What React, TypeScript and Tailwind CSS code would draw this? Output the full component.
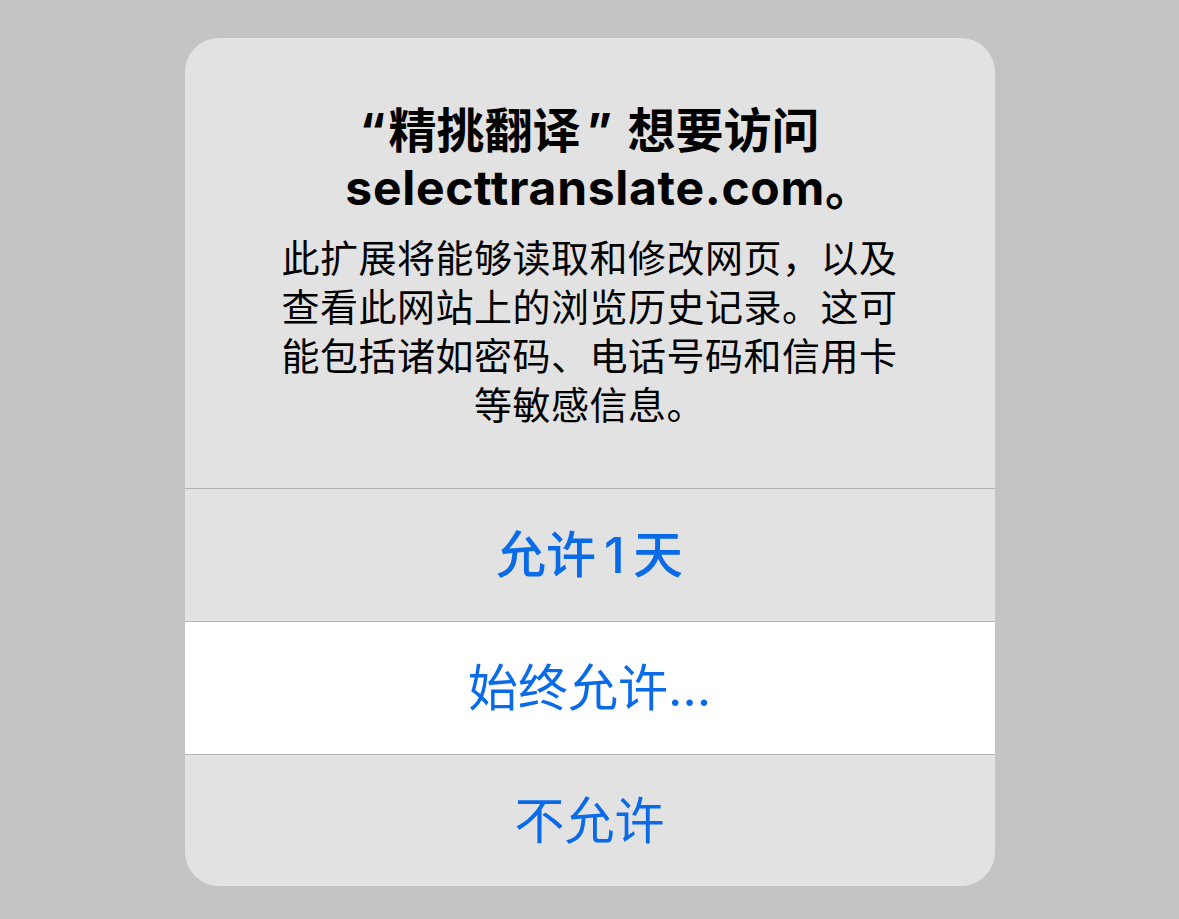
export default function App() {
  return (
    <div className="w-full h-[919px] bg-[#c4c4c4] flex justify-center pt-[38px] font-['Inter','Noto_Sans_CJK_SC',sans-serif]">
      <div className="w-[810px] h-[848px] bg-[#e2e2e2] rounded-[34px] overflow-hidden flex flex-col">
        {/* Header: title + message */}
        <div className="h-[450px] pt-[64px] flex flex-col items-center text-black">
          <h1 className="text-[48px] leading-[57px] font-bold text-center">
            <span className="mr-[3px]">“</span>精挑翻译
            <span className="ml-[6px] mr-[4px]">”</span> 想要访问
            <br />
            <span className="pl-[40px] tracking-[0.7px]">selecttranslate.com。</span>
          </h1>
          <p className="mt-[18px] text-[38px] leading-[49px] tracking-[0.5px] text-center">
            此扩展将能够读取和修改网页，以及
            <br />
            查看此网站上的浏览历史记录。这可
            <br />
            能包括诸如密码、电话号码和信用卡
            <br />
            等敏感信息。
          </p>
        </div>

        {/* Actions */}
        <button className="h-[133px] shrink-0 border-t border-[#b2b2b2] flex items-center justify-center text-[50px] leading-none font-medium text-[#0a6be8]">
          允许<span className="mx-[8px]">1</span>天
        </button>
        <button className="h-[133px] shrink-0 border-t border-[#b2b2b2] bg-white flex items-center justify-center text-[50px] leading-none text-[#0a6be8]">
          始终允许…
        </button>
        <button className="h-[132px] shrink-0 border-t border-[#b2b2b2] flex items-center justify-center text-[50px] leading-none text-[#0a6be8]">
          不允许
        </button>
      </div>
    </div>
  );
}
